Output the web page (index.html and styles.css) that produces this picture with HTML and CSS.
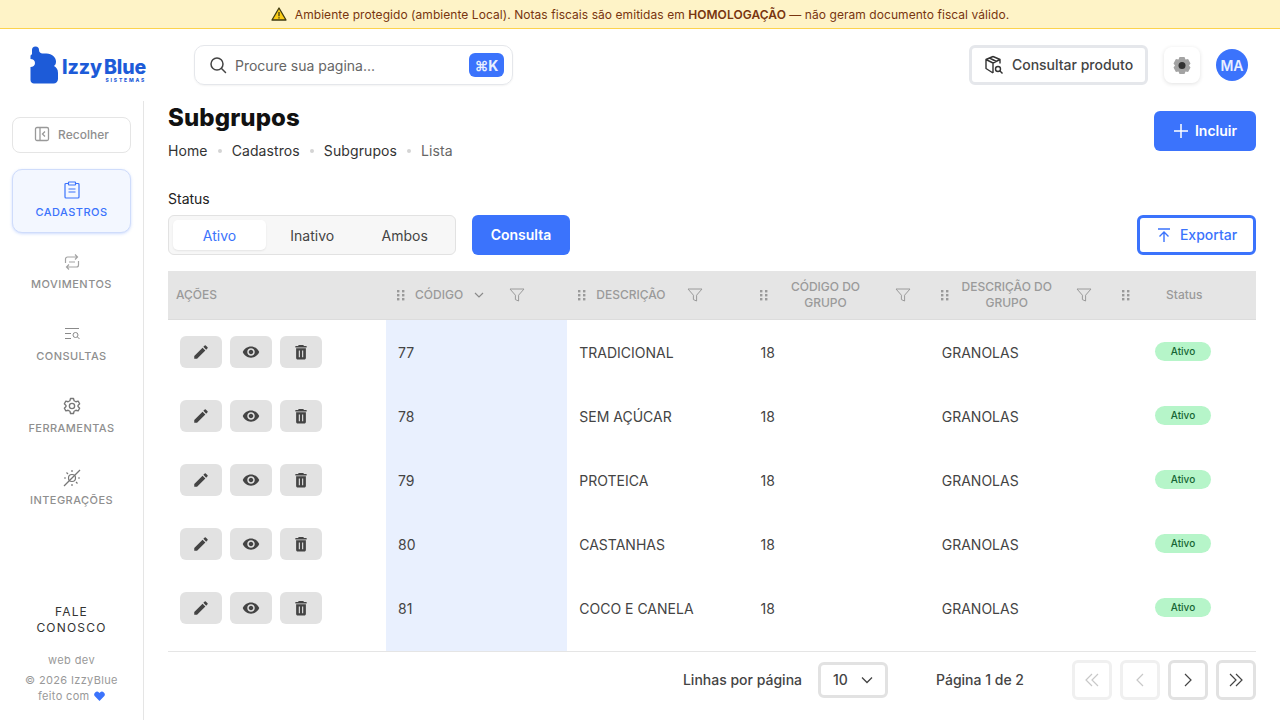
FILE: index.html
```html
<!DOCTYPE html>
<html lang="pt-BR">
<head>
    <meta charset="UTF-8">
    <meta name="viewport" content="width=device-width, initial-scale=1.0">
    <title>Subgrupos - IzzyBlue</title>
    <link rel="stylesheet" href="styles.css">
</head>
<body>
    <svg class="hidden">
        <symbol id="i-grip" viewBox="0 0 10 12"><g fill="#9a9a9a"><rect x="1" y="1" width="2.4" height="2.4"/><rect x="6" y="1" width="2.4" height="2.4"/><rect x="1" y="5" width="2.4" height="2.4"/><rect x="6" y="5" width="2.4" height="2.4"/><rect x="1" y="9" width="2.4" height="2.4"/><rect x="6" y="9" width="2.4" height="2.4"/></g></symbol>
        <symbol id="i-filter" viewBox="0 0 16 16"><path d="M1 2h14l-5.400 6.200V14l-3.200-1.400V8.200z" fill="none" stroke="#9a9a9a" stroke-width="1" stroke-linejoin="round"/></symbol>
        <symbol id="i-pencil" viewBox="0 0 24 24"><path fill="#444" d="M3 17.250V21h3.750L17.810 9.940l-3.750-3.750L3 17.250zM20.710 7.040a1 1 0 0 0 0-1.410l-2.340-2.340a1 1 0 0 0-1.410 0l-1.830 1.830 3.750 3.750 1.830-1.830z"/></symbol>
        <symbol id="i-eye" viewBox="0 0 24 24"><path fill="#444" d="M12 4.500C7 4.500 2.730 7.610 1 12c1.730 4.390 6 7.500 11 7.500s9.270-3.110 11-7.500c-1.730-4.390-6-7.500-11-7.500zM12 17c-2.760 0-5-2.240-5-5s2.240-5 5-5 5 2.240 5 5-2.240 5-5 5zm0-8c-1.660 0-3 1.340-3 3s1.340 3 3 3 3-1.340 3-3-1.340-3-3-3z"/></symbol>
        <symbol id="i-trash" viewBox="0 0 24 24"><path fill="#444" d="M5.500 20c0 1.100.9 2 2 2h9c1.100 0 2-.9 2-2V7h-13v13zM19.500 4H16l-1-1.500H9L8 4H4.500v2h15V4z"/><path d="M9.800 10v9M14.200 10v9" stroke="#e2e2e2" stroke-width="1.500"/></symbol>
    </svg>

    <div class="env-banner">
        <svg class="env-icon" width="16" height="14" viewBox="0 0 16 14"><path d="M8 1 15 13H1z" fill="#facc15" stroke="#3f3a10" stroke-width="1.300" stroke-linejoin="round"/><path d="M8 5v4.200M8 10.300v1.200" stroke="#3f3a10" stroke-width="1.300"/></svg>
        <span>Ambiente protegido (ambiente Local). Notas fiscais são emitidas em <strong>HOMOLOGAÇÃO</strong> — não geram documento fiscal válido.</span>
    </div>

    <header class="topbar">
        <div class="logo">
            <svg width="28" height="38" viewBox="0 0 28 38"><path fill="#1d5bd8" d="M2 8.500V4a3.500 3.500 0 0 1 7 0c0 2 1.500 3.500 3.500 3.500h4C22 7.500 26 11.500 26 15.500c0 2.500-1 3.800-2 4.500 2 1 4 3 4 7v6c0 2.500-2 4.500-4.500 4.500H4c-2 0-3.500-1.500-3.500-3.500V21c2.500 0 4.500-1.500 4.500-4s-2-4-4.500-4V10c0-.8.700-1.500 1.500-1.500z"/></svg>
            <div class="logo-text">
                <div class="logo-name"><span>Izzy</span><span>Blue</span></div>
                <div class="logo-sub">SISTEMAS</div>
            </div>
        </div>
        <div class="search">
            <svg width="18" height="18" viewBox="0 0 18 18" fill="none" stroke="#444" stroke-width="1.500"><circle cx="8" cy="8" r="6"/><path d="m12.500 12.500 4 4" stroke-linecap="round"/></svg>
            <span class="search-text">Procure sua pagina...</span>
            <span class="kbd">⌘K</span>
        </div>
        <div class="topbar-right">
            <button class="product-btn">
                <svg width="20" height="20" viewBox="0 0 20 20" fill="none" stroke="#333" stroke-width="1.400" stroke-linejoin="round"><path d="M9 1.500 2 4.500v9l7 4.500M9 1.500l7 3v4M2 4.500 9 8l7-3.500M9 8v10M5.500 3l7 3.500"/><circle cx="14" cy="14" r="2.500"/><path d="m16 16 2.500 2.500"/></svg>
                Consultar produto
            </button>
            <button class="theme-btn">
                <svg width="18" height="18" viewBox="0 0 18 18"><path fill="#a3a3a3" d="M6.500 1h5l1 2.500 2.600-.4 2.400 4.400L16 9.500l1.500 2-2.400 4.400-2.600-.4-1 2.500h-5l-1-2.500-2.600.4L.5 11.500l1.500-2-1.500-2L2.900 3.100l2.600.4z"/><circle cx="9" cy="9.500" r="3.500" fill="#333"/></svg>
            </button>
            <div class="avatar">MA</div>
        </div>
    </header>

    <div class="layout">
        <aside class="sidebar">
            <div class="side-top">
                <button class="collapse-btn">
                    <svg width="16" height="16" viewBox="0 0 16 16" fill="none" stroke="#999" stroke-width="1.300"><rect x="1.500" y="1.500" width="13" height="13" rx="1.500"/><path d="M6 1.500v13M11 5.500 8.500 8l2.500 2.500"/></svg>
                    Recolher
                </button>
                <nav class="side-nav">
                    <a class="nav-item active">
                        <svg width="16" height="18" viewBox="0 0 16 18" fill="none" stroke="#3b73fc" stroke-width="1.200"><path d="M4.500 2.500H2a1 1 0 0 0-1 1V16a1 1 0 0 0 1 1h12a1 1 0 0 0 1-1V3.500a1 1 0 0 0-1-1h-2.500"/><rect x="4.500" y="1" width="7" height="3" rx=".5"/><path d="M4.500 8h7M4.500 11h7"/></svg>
                        <span>CADASTROS</span>
                    </a>
                    <a class="nav-item">
                        <svg width="16" height="16" viewBox="0 0 16 16" fill="none" stroke="#a3a3a3" stroke-width="1.200"><path d="M1.500 9V5a2 2 0 0 1 2-2h10M11 .5 13.500 3 11 5.500M14.500 7v4a2 2 0 0 1-2 2h-10M5 10.500 2.500 13 5 15.500M5 8h6"/></svg>
                        <span>MOVIMENTOS</span>
                    </a>
                    <a class="nav-item">
                        <svg width="16" height="16" viewBox="0 0 16 16" fill="none" stroke="#8a8a8a" stroke-width="1"><path d="M1 2.500h14M1 7.500h6M1 12.500h6"/><circle cx="11.500" cy="9" r="2.500"/><path d="m13.500 11 2 2"/></svg>
                        <span>CONSULTAS</span>
                    </a>
                    <a class="nav-item">
                        <svg width="18" height="18" viewBox="0 0 24 24" fill="none" stroke="#777" stroke-width="1.800"><circle cx="12" cy="12" r="3.500"/><path d="M10 2h4l.8 3 2.400 1.300 3-.8 2 3.500-2.200 2.200v1.600l2.200 2.200-2 3.500-3-.8-2.400 1.300-.8 3h-4l-.8-3-2.400-1.300-3 .8-2-3.500 2.200-2.200v-1.600L1.800 9l2-3.500 3 .8L9.200 5z" stroke-linejoin="round"/></svg>
                        <span>FERRAMENTAS</span>
                    </a>
                    <a class="nav-item">
                        <svg width="18" height="18" viewBox="0 0 18 18" fill="none" stroke="#777" stroke-width="1.200"><path d="M1 17 17 1"/><circle cx="9" cy="9" r="3.500"/><path d="M9 1v2M3.500 3.500 5 5M1 9h2M15 9h2M13 13l1.500 1.500M9 15v2"/></svg>
                        <span>INTEGRAÇÕES</span>
                    </a>
                </nav>
            </div>
            <div class="side-bottom">
                <div class="contact">FALE<br>CONOSCO</div>
                <div class="version">web dev</div>
                <div class="copyright">© 2026 IzzyBlue<br>feito com <svg width="11" height="10" viewBox="0 0 11 10"><path fill="#3b73fc" d="M5.500 10 .9 5.300A2.800 2.800 0 0 1 5 1.500l.5.500.5-.5a2.800 2.800 0 0 1 4.100 3.800z"/></svg></div>
            </div>
        </aside>

        <main class="content">
            <div class="page-head">
                <div class="page-title">
                    <h1>Subgrupos</h1>
                    <div class="breadcrumb">
                        <span>Home</span><i></i><span>Cadastros</span><i></i><span>Subgrupos</span><i></i><span class="current">Lista</span>
                    </div>
                </div>
                <button class="btn-primary btn-add">
                    <svg width="16" height="16" viewBox="0 0 16 16" stroke="#fff" stroke-width="1.500"><path d="M8 1v14M1 8h14"/></svg>
                    Incluir
                </button>
            </div>

            <div class="filters">
                <div>
                    <label class="filter-label">Status</label>
                    <div class="filter-row">
                        <div class="segmented">
                            <span class="seg active">Ativo</span>
                            <span class="seg">Inativo</span>
                            <span class="seg">Ambos</span>
                        </div>
                        <button class="btn-primary btn-query">Consulta</button>
                    </div>
                </div>
                <button class="btn-export">
                    <svg width="16" height="16" viewBox="0 0 16 16" fill="none" stroke="#3b73fc" stroke-width="1.400"><path d="M2 2h12M8 15V5M3.500 9.500 8 5l4.500 4.500"/></svg>
                    Exportar
                </button>
            </div>

            <table class="grid">
                <colgroup>
                    <col class="col-actions"><col class="col-std"><col class="col-std"><col class="col-std"><col class="col-std"><col class="col-status">
                </colgroup>
                <thead>
                    <tr>
                        <th class="th-actions">AÇÕES</th>
                        <th><div class="th-in"><svg class="grip"><use href="#i-grip"/></svg><span class="lbl-code">CÓDIGO</span><svg class="sort" width="12" height="12" viewBox="0 0 12 12" fill="none" stroke="#8a8a8a" stroke-width="1.200"><path d="m2 4 4 4 4-4"/></svg><svg class="filter filter-code"><use href="#i-filter"/></svg></div></th>
                        <th><div class="th-in"><svg class="grip"><use href="#i-grip"/></svg><span class="lbl-desc">DESCRIÇÃO</span><svg class="filter"><use href="#i-filter"/></svg></div></th>
                        <th><div class="th-in"><svg class="grip"><use href="#i-grip"/></svg><span class="lbl-wrap">CÓDIGO DO GRUPO</span><svg class="filter"><use href="#i-filter"/></svg></div></th>
                        <th><div class="th-in"><svg class="grip"><use href="#i-grip"/></svg><span class="lbl-wrap">DESCRIÇÃO DO GRUPO</span><svg class="filter"><use href="#i-filter"/></svg></div></th>
                        <th><div class="th-in"><svg class="grip"><use href="#i-grip"/></svg><span class="lbl-status">Status</span></div></th>
                    </tr>
                </thead>
                <tbody>
                    <tr>
                        <td class="td-actions"><div class="row-actions"><button class="act"><svg><use href="#i-pencil"/></svg></button><button class="act"><svg><use href="#i-eye"/></svg></button><button class="act"><svg><use href="#i-trash"/></svg></button></div></td>
                        <td class="td-code">77</td><td>TRADICIONAL</td><td>18</td><td>GRANOLAS</td><td><span class="badge">Ativo</span></td>
                    </tr>
                    <tr>
                        <td class="td-actions"><div class="row-actions"><button class="act"><svg><use href="#i-pencil"/></svg></button><button class="act"><svg><use href="#i-eye"/></svg></button><button class="act"><svg><use href="#i-trash"/></svg></button></div></td>
                        <td class="td-code">78</td><td>SEM AÇÚCAR</td><td>18</td><td>GRANOLAS</td><td><span class="badge">Ativo</span></td>
                    </tr>
                    <tr>
                        <td class="td-actions"><div class="row-actions"><button class="act"><svg><use href="#i-pencil"/></svg></button><button class="act"><svg><use href="#i-eye"/></svg></button><button class="act"><svg><use href="#i-trash"/></svg></button></div></td>
                        <td class="td-code">79</td><td>PROTEICA</td><td>18</td><td>GRANOLAS</td><td><span class="badge">Ativo</span></td>
                    </tr>
                    <tr>
                        <td class="td-actions"><div class="row-actions"><button class="act"><svg><use href="#i-pencil"/></svg></button><button class="act"><svg><use href="#i-eye"/></svg></button><button class="act"><svg><use href="#i-trash"/></svg></button></div></td>
                        <td class="td-code">80</td><td>CASTANHAS</td><td>18</td><td>GRANOLAS</td><td><span class="badge">Ativo</span></td>
                    </tr>
                    <tr>
                        <td class="td-actions"><div class="row-actions"><button class="act"><svg><use href="#i-pencil"/></svg></button><button class="act"><svg><use href="#i-eye"/></svg></button><button class="act"><svg><use href="#i-trash"/></svg></button></div></td>
                        <td class="td-code">81</td><td>COCO E CANELA</td><td>18</td><td>GRANOLAS</td><td><span class="badge">Ativo</span></td>
                    </tr>
                    <tr class="filler">
                        <td></td><td class="td-code"></td><td></td><td></td><td></td><td></td>
                    </tr>
                </tbody>
            </table>

            <div class="pager">
                <span class="pager-label">Linhas por página</span>
                <div class="page-size">10 <svg width="14" height="14" viewBox="0 0 14 14" fill="none" stroke="#444" stroke-width="1.300"><path d="m2 4.500 5 5 5-5"/></svg></div>
                <span class="page-info">Página 1 de 2</span>
                <div class="page-btns">
                    <button class="page-btn disabled"><svg width="16" height="16" viewBox="0 0 16 16" fill="none" stroke="#c8c8c8" stroke-width="1.200"><path d="M8 2 2 8l6 6M14 2 8 8l6 6"/></svg></button>
                    <button class="page-btn disabled"><svg width="16" height="16" viewBox="0 0 16 16" fill="none" stroke="#c8c8c8" stroke-width="1.200"><path d="M11 2 5 8l6 6"/></svg></button>
                    <button class="page-btn"><svg width="16" height="16" viewBox="0 0 16 16" fill="none" stroke="#444" stroke-width="1.200"><path d="m5 2 6 6-6 6"/></svg></button>
                    <button class="page-btn"><svg width="16" height="16" viewBox="0 0 16 16" fill="none" stroke="#444" stroke-width="1.200"><path d="m2 2 6 6-6 6M8 2l6 6-6 6"/></svg></button>
                </div>
            </div>
        </main>
    </div>
</body>
</html>
```

FILE: styles.css
```css
* {
    margin: 0;
    padding: 0;
    box-sizing: border-box;
}
body {
    font-family: Inter, 'Liberation Sans', sans-serif;
    background: #fff;
    color: #1f1f1f;
    height: 720px;
    overflow: hidden;
    display: flex;
    flex-direction: column;
}
button {
    font-family: inherit;
    cursor: pointer;
}
.hidden {
    position: absolute;
    width: 0;
    height: 0;
}

/* banner */
.env-banner {
    height: 29px;
    flex: none;
    background: #fef3c7;
    border-bottom: 1px solid #fcd34d;
    color: #78350f;
    font-size: 12px;
    letter-spacing: 0.06px;
    display: flex;
    align-items: center;
    justify-content: center;
    gap: 8px;
}
.env-banner strong {
    font-weight: 600;
}

/* top bar */
.topbar {
    height: 72px;
    flex: none;
    display: flex;
    align-items: center;
    padding: 0 32px 0 30px;
}
.logo {
    width: 164px;
    display: flex;
    align-items: center;
    gap: 4px;
}
.logo-text {
    margin-top: 11px;
}
.logo-name {
    font-size: 19.500px;
    font-weight: 800;
    line-height: 17px;
    color: #1d5bd8;
    display: flex;
    gap: 2px;
    letter-spacing: -0.1px;
}
.logo-sub {
    margin-top: 2px;
    font-size: 5px;
    font-weight: 800;
    line-height: 5px;
    color: #1d5bd8;
    text-align: right;
    letter-spacing: 1.800px;
}
.search {
    width: 319px;
    height: 40px;
    border: 1px solid #e5e7eb;
    border-radius: 10px;
    display: flex;
    align-items: center;
    padding: 0 8px 0 14px;
    box-shadow: 0 1px 2px rgba(0, 0, 0, 0.05);
}
.search-text {
    flex: 1;
    margin-left: 8px;
    font-size: 14px;
    color: #666;
}
.kbd {
    width: 35px;
    height: 24px;
    background: #3b73fc;
    color: #e8efff;
    border-radius: 6px;
    font-size: 14px;
    font-weight: 700;
    display: flex;
    align-items: center;
    justify-content: center;
}
.topbar-right {
    margin-left: auto;
    display: flex;
    align-items: center;
}
.product-btn {
    width: 179px;
    height: 40px;
    background: #fff;
    border: 3px solid #e5e7eb;
    border-radius: 6px;
    padding-bottom: 1px;
    display: flex;
    align-items: center;
    justify-content: center;
    gap: 8px;
    font-size: 14px;
    font-weight: 500;
    color: #444;
}
.theme-btn {
    width: 36px;
    height: 36px;
    margin-left: 16px;
    background: #fff;
    border: none;
    border-radius: 8px;
    box-shadow: 0 1px 4px rgba(0, 0, 0, 0.12);
    display: flex;
    align-items: center;
    justify-content: center;
}
.avatar {
    width: 32px;
    height: 32px;
    margin-left: 16px;
    border-radius: 50%;
    background: #3b73fc;
    color: #e8efff;
    font-size: 14px;
    font-weight: 600;
    display: flex;
    align-items: center;
    justify-content: center;
}

/* layout */
.layout {
    flex: 1;
    display: flex;
    min-height: 0;
}
.sidebar {
    width: 144px;
    flex: none;
    border-right: 1px solid #e5e5e5;
    padding: 16px 12px 16px;
    display: flex;
    flex-direction: column;
    justify-content: space-between;
}
.collapse-btn {
    width: 119px;
    height: 36px;
    padding-bottom: 2px;
    background: #fff;
    border: 1px solid #e5e5e5;
    border-radius: 8px;
    color: #8f8f8f;
    font-size: 12px;
    font-weight: 500;
    display: flex;
    align-items: center;
    justify-content: center;
    gap: 8px;
}
.side-nav {
    margin-top: 16px;
    display: flex;
    flex-direction: column;
    gap: 8px;
}
.nav-item {
    height: 64px;
    width: 119px;
    padding-bottom: 2px;
    display: flex;
    flex-direction: column;
    align-items: center;
    justify-content: center;
    gap: 6px;
    font-size: 11px;
    font-weight: 500;
    letter-spacing: 0.45px;
    color: #8f8f8f;
    border-radius: 10px;
}
.nav-item svg {
    height: 18px;
}
.nav-item.active {
    background: #f3f7ff;
    border: 1px solid #cfdcfb;
    box-shadow: 0 1px 3px rgba(59, 115, 252, 0.25);
    color: #3b73fc;
}
.side-bottom {
    text-align: center;
}
.contact {
    font-size: 12px;
    line-height: 16px;
    letter-spacing: 1.200px;
    color: #333;
}
.version {
    margin-top: 16px;
    font-size: 11px;
    line-height: 16px;
    color: #999;
    letter-spacing: 0.4px;
}
.copyright {
    margin-top: 4px;
    font-size: 11px;
    line-height: 16px;
    color: #999;
    letter-spacing: 0.35px;
}
.copyright svg {
    vertical-align: -1px;
    margin-left: 1px;
}

/* content */
.content {
    flex: 1;
    padding: 0 24px;
    min-width: 0;
}
.page-head {
    height: 66px;
    display: flex;
    justify-content: space-between;
    align-items: flex-end;
    margin-bottom: 32px;
}
.page-title {
    align-self: flex-start;
    padding-top: 1px;
}
.page-head h1 {
    font-size: 24px;
    font-weight: 800;
    line-height: 32px;
    letter-spacing: 0.1px;
    color: #111;
}
.breadcrumb {
    display: flex;
    align-items: center;
    gap: 10px;
    font-size: 14px;
    line-height: 20px;
    letter-spacing: 0.1px;
    color: #333;
    margin-top: 7px;
}
.breadcrumb i {
    width: 4px;
    height: 4px;
    border-radius: 50%;
    background: #d4d4d4;
}
.breadcrumb .current {
    color: #666;
}
.btn-primary {
    background: #3b73fc;
    color: #fff;
    border: none;
    border-radius: 6px;
    padding-bottom: 1px;
    font-size: 14px;
    font-weight: 600;
    display: flex;
    align-items: center;
    justify-content: center;
}
.btn-add {
    width: 102px;
    height: 40px;
    gap: 6px;
    margin-bottom: 16px;
}
.filters {
    height: 56px;
    display: flex;
    justify-content: space-between;
    align-items: flex-end;
}
.filter-label {
    display: block;
    font-size: 14px;
    line-height: 20px;
    color: #222;
    margin-bottom: 6px;
}
.filter-row {
    display: flex;
    gap: 16px;
}
.segmented {
    width: 288px;
    height: 40px;
    background: #f7f7f7;
    border: 1px solid #e2e2e2;
    border-radius: 6px;
    padding: 4px;
    display: flex;
}
.seg {
    flex: 1;
    display: flex;
    align-items: center;
    justify-content: center;
    font-size: 14px;
    color: #444;
    border-radius: 5px;
}
.seg.active {
    flex: none;
    width: 93px;
    background: #fff;
    color: #3b73fc;
    box-shadow: 0 1px 2px rgba(0, 0, 0, 0.08);
}
.btn-query {
    width: 98px;
    height: 40px;
}
.btn-export {
    width: 119px;
    height: 40px;
    background: #fff;
    border: 3px solid #3b73fc;
    border-radius: 6px;
    padding-bottom: 1px;
    color: #3b73fc;
    font-size: 14px;
    font-weight: 500;
    display: flex;
    align-items: center;
    justify-content: center;
    gap: 8px;
}

/* table */
.grid {
    width: 1088px;
    margin-top: 16px;
    table-layout: fixed;
    border-collapse: collapse;
    border-bottom: 1px solid #e5e5e5;
}
.col-actions {
    width: 218px;
}
.col-std {
    width: 181.250px;
}
.col-status {
    width: 145px;
}
.grid th {
    height: 48px;
    background: #e5e5e5;
    border-bottom: 1px solid #dcdcdc;
    color: #9a9a9a;
    font-size: 12px;
    font-weight: 500;
    line-height: 16px;
    text-align: left;
}
.grid .th-actions {
    padding-left: 8px;
}
.th-in {
    display: flex;
    align-items: center;
    padding-left: 10px;
}
.grip {
    width: 10px;
    height: 12px;
    flex: none;
}
.filter {
    width: 16px;
    height: 16px;
    flex: none;
}
.lbl-code {
    margin-left: 9px;
}
.sort {
    margin-left: 10px;
}
.filter-code {
    margin-left: 24px;
}
.lbl-desc {
    margin-left: 9px;
    margin-right: 21px;
}
.lbl-wrap {
    width: 106px;
    margin-left: 4px;
    margin-right: 16.500px;
    text-align: center;
}
.lbl-status {
    margin-left: 35px;
}
.grid td {
    height: 64px;
    padding: 3px 0 0 12px;
    font-size: 14px;
    color: #444;
}
.grid .td-actions {
    padding: 0 0 0 12px;
}
.grid .td-code {
    background: #e9f0fe;
}
.grid .filler td {
    height: 12px;
    padding: 0;
}
.row-actions {
    display: flex;
    gap: 8px;
    margin-top: 2px;
}
.act {
    width: 42px;
    height: 32px;
    background: #e2e2e2;
    border: none;
    border-radius: 6px;
    display: flex;
    align-items: center;
    justify-content: center;
}
.act svg {
    width: 18px;
    height: 18px;
}
.badge {
    display: block;
    width: 56px;
    height: 19px;
    margin-left: 32px;
    margin-top: -2px;
    background: #b6f5c9;
    border-radius: 10px;
    color: #166534;
    font-size: 10px;
    font-weight: 500;
    line-height: 19px;
    text-align: center;
}

/* pager */
.pager {
    display: flex;
    align-items: center;
    justify-content: flex-end;
    height: 56px;
    font-size: 14px;
    color: #444;
    font-weight: 500;
}
.page-size {
    width: 70px;
    height: 36px;
    margin-left: 16px;
    border: 3px solid #e2e2e2;
    border-radius: 6px;
    display: flex;
    align-items: center;
    justify-content: space-between;
    padding: 0 11px 0 12px;
}
.page-info {
    margin-left: 48px;
    margin-right: 48px;
}
.page-btns {
    display: flex;
    gap: 8px;
}
.page-btn {
    width: 40px;
    height: 40px;
    background: #fff;
    border: 3px solid #e2e2e2;
    border-radius: 6px;
    display: flex;
    align-items: center;
    justify-content: center;
}
.page-btn.disabled {
    border-color: #f0f0f0;
}
```
